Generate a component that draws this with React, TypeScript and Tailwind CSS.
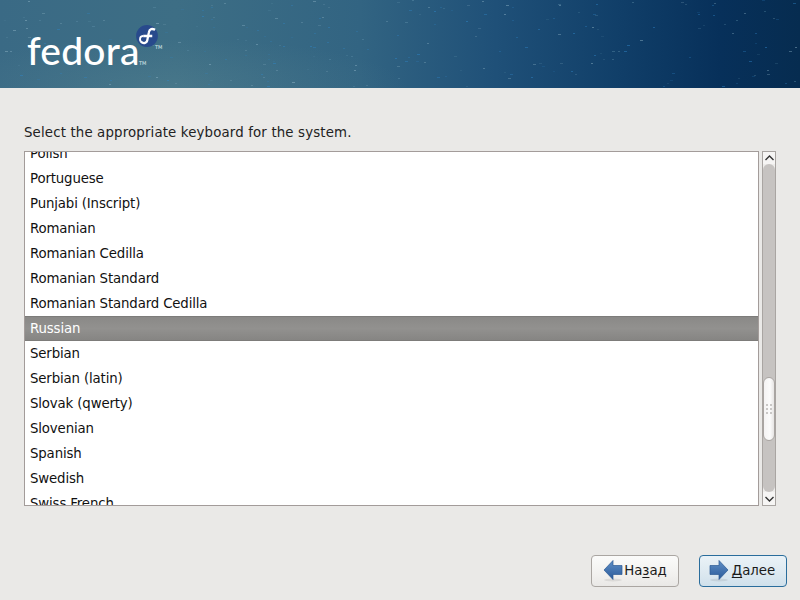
const LAYOUTS = [
  "Polish",
  "Portuguese",
  "Punjabi (Inscript)",
  "Romanian",
  "Romanian Cedilla",
  "Romanian Standard",
  "Romanian Standard Cedilla",
  "Russian",
  "Serbian",
  "Serbian (latin)",
  "Slovak (qwerty)",
  "Slovenian",
  "Spanish",
  "Swedish",
  "Swiss French",
];

// Deterministic speckle for the banner
function makeStars() {
  const stars: { x: number; y: number; w: number; o: number; c: string }[] = [];
  let seed = 12345;
  const rnd = () => {
    seed = (seed * 16807) % 2147483647;
    return seed / 2147483647;
  };
  for (let i = 0; i < 240; i++) {
    const roll = rnd();
    stars.push({
      x: Math.floor(rnd() * 800),
      y: Math.floor(rnd() * 88),
      w: rnd() > 0.7 ? 3 : 2,
      o: 0.15 + rnd() * 0.35,
      c: roll > 0.6 ? "#2f86c9" : roll > 0.3 ? "#8fb4c6" : "#5d8ea8",
    });
  }
  return stars;
}

function Banner() {
  const stars = makeStars();
  return (
    <div className="relative h-[88px] overflow-hidden bg-[linear-gradient(90deg,#3a6a85_0%,#3d6e85_22%,#326482_45%,#1f5078_62%,#103e68_78%,#07305a_90%,#062c50_100%)]">
      <div className="absolute inset-0 bg-[radial-gradient(ellipse_240px_50px_at_170px_100%,rgba(120,160,160,0.18),transparent)]" />
      <svg className="absolute inset-0" width="800" height="88">
        {stars.map((s, i) => (
          <rect key={i} x={s.x} y={s.y} width={s.w} height="1" fill={s.c} opacity={s.o} />
        ))}
      </svg>
      <div className="relative pl-[27px] pt-[22px] flex items-start">
        <span className="font-['Lato',sans-serif] font-medium text-[39px] leading-[56px] text-white tracking-[0.2px]">
          fedora
        </span>
        <svg className="absolute left-[136px] top-[25px]" width="22" height="22" viewBox="0 0 23 23">
          <circle cx="11.5" cy="11.5" r="11.4" fill="#284a8c" />
          <path
            d="M20 5 C17 3.5 14 4 13.5 7.5 L12 15 C11.5 19 8 20 5 17.5 M7.5 11.5 L17 11.5"
            fill="none"
            stroke="#fff"
            strokeWidth="2.4"
          />
          <path d="M7.5 11.5 C4 11.5 3.5 15 5 17.5" fill="none" stroke="#fff" strokeWidth="2" />
        </svg>
        <span className="absolute left-[139px] top-[60px] text-[5px] leading-[6px] text-[#dfe8ec]">TM</span>
        <span className="absolute left-[155px] top-[44px] text-[5px] leading-[6px] text-[#dfe8ec]">TM</span>
      </div>
    </div>
  );
}

function Scrollbar() {
  return (
    <div className="w-[14px] h-[355px] ml-[3px] border border-[#a9a5a2] flex flex-col bg-[#eeedeb]">
      <div className="h-[12px] shrink-0 bg-[#f6f5f4] flex items-center justify-center">
        <svg width="9" height="6" viewBox="0 0 9 6">
          <path d="M0.5 5 L4.5 1 L8.5 5" fill="none" stroke="#333" strokeWidth="1.4" />
        </svg>
      </div>
      <div className="flex-1 bg-[#c6c3c1] rounded-t-[6px] rounded-b-[6px] pt-[213px]">
        <div className="h-[64px] rounded-[6px] border border-[#a9a5a2] bg-[linear-gradient(90deg,#f4f3f3,#fbfbfb_60%,#e6e4e3)] flex items-center justify-center">
          <div className="grid grid-cols-2 gap-x-[2px] gap-y-[2px]">
            {[0, 1, 2, 3, 4, 5].map((i) => (
              <div key={i} className="w-[2px] h-[2px] bg-[#c9c7c6]" />
            ))}
          </div>
        </div>
      </div>
      <div className="h-[13px] shrink-0 bg-[#f6f5f4] flex items-center justify-center">
        <svg width="9" height="6" viewBox="0 0 9 6">
          <path d="M0.5 1 L4.5 5 L8.5 1" fill="none" stroke="#333" strokeWidth="1.4" />
        </svg>
      </div>
    </div>
  );
}

function ArrowIcon({ flip }: { flip?: boolean }) {
  const id = flip ? "arrB" : "arrF";
  return (
    <svg width="20" height="22" viewBox="0 0 20 22" className={flip ? "-scale-x-100" : ""}>
      <defs>
        <linearGradient id={id} x1="0" y1="0" x2="0" y2="1">
          <stop offset="0" stopColor="#5f8fc6" />
          <stop offset="1" stopColor="#2a5a9a" />
        </linearGradient>
      </defs>
      <ellipse cx="10" cy="20" rx="9" ry="1.5" fill="#000" opacity="0.08" />
      <path d="M1 5.5 H10 V0.5 L19 10 L10 19.5 V14.5 H1 Z" fill={`url(#${id})`} stroke="#2d5a94" strokeWidth="0.7" />
    </svg>
  );
}

export default function App() {
  return (
    <div className="w-[800px] h-[600px] overflow-hidden bg-[#eae9e7] font-['DejaVu_Sans',sans-serif] text-[13.33px] text-[#1a1a1a]">
      <Banner />
      <div className="pl-6 pt-[37px]">
        <p className="h-[16px] leading-[16px] mb-[10px] text-[#222] tracking-[0.15px]">
          Select the appropriate keyboard for the system.
        </p>
        <div className="flex">
          <div className="w-[735px] h-[355px] border border-[#a39c9a] bg-white overflow-hidden tracking-[-0.15px]">
            <div className="-mt-[11px]">
              {LAYOUTS.map((name) =>
                name === "Russian" ? (
                  <div
                    key={name}
                    className="h-[25px] leading-[24px] pl-[5px] text-white border-y border-[#7d7c7a] bg-[linear-gradient(#8a8987,#92918f_50%,#868583)]"
                  >
                    {name}
                  </div>
                ) : (
                  <div key={name} className="h-[25px] leading-[25px] pl-[5px] text-[#111]">
                    {name}
                  </div>
                ),
              )}
            </div>
          </div>
          <Scrollbar />
        </div>
        <div className="flex justify-end gap-5 pr-[13px] mt-[49px]">
          <button className="w-[88px] h-[32px] rounded-[4px] border border-[#aaa6a2] bg-[linear-gradient(#fbfbfa,#f2f1ef_60%,#e9e8e6)] flex items-center justify-center gap-[1px]">
            <ArrowIcon flip />
            <span>
              На<span className="underline decoration-1 underline-offset-2">з</span>ад
            </span>
          </button>
          <button className="w-[88px] h-[32px] rounded-[4px] border-[1.5px] border-[#2a6d9c] bg-[linear-gradient(#eaf2f7,#dce8f0_60%,#cfe0eb)] flex items-center justify-center gap-[3px] pr-[2px]">
            <ArrowIcon />
            <span>
              <span className="underline decoration-1 underline-offset-2">Д</span>алее
            </span>
          </button>
        </div>
      </div>
    </div>
  );
}
